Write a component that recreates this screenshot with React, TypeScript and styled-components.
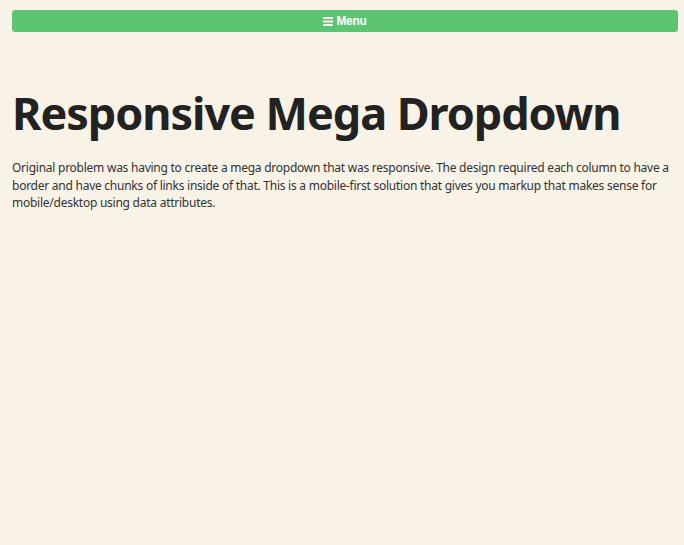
import { createGlobalStyle, styled } from "styled-components";

const GlobalStyle = createGlobalStyle`
  html, body {
    margin: 0;
    padding: 0;
    background: #f9f2e7;
  }
  body {
    font-family: "Noto Sans", "Open Sans", sans-serif;
    color: #333;
  }
`;

const Page = styled.div`
  min-height: 545px;
  padding: 10px 6px 0 12px;
  box-sizing: border-box;
`;

const MenuButton = styled.button`
  width: 100%;
  height: 22px;
  display: flex;
  align-items: center;
  justify-content: center;
  gap: 3px;
  border: none;
  border-radius: 3px;
  background: #5bc571;
  color: #fff;
  font-family: "Liberation Sans", Arial, sans-serif;
  font-weight: 700;
  font-size: 12px;
  letter-spacing: -0.3px;
  cursor: pointer;
`;

const Title = styled.h1`
  margin: 53px 0 0;
  font-size: 45px;
  line-height: 56px;
  font-weight: 700;
  color: #222;
  letter-spacing: -1.05px;
`;

const Lead = styled.p`
  margin: 18px 0 0;
  font-size: 12px;
  line-height: 17.5px;
  color: #333;
  letter-spacing: -0.25px;
`;

const BarsIcon = () => (
  <svg width="10" height="9" viewBox="0 0 10 9" fill="#fff">
    <rect x="0" y="0" width="10" height="2" />
    <rect x="0" y="3.5" width="10" height="2" />
    <rect x="0" y="7" width="10" height="2" />
  </svg>
);

export default function App() {
  return (
    <>
      <GlobalStyle />
      <Page>
        <MenuButton>
          <BarsIcon />
          Menu
        </MenuButton>
        <Title>Responsive Mega Dropdown</Title>
        <Lead>
          Original problem was having to create a mega dropdown that was
          responsive. The design required each column to have a border and
          have chunks of links inside of that. This is a mobile-first solution
          that gives you markup that makes sense for mobile/desktop using data
          attributes.
        </Lead>
      </Page>
    </>
  );
}
